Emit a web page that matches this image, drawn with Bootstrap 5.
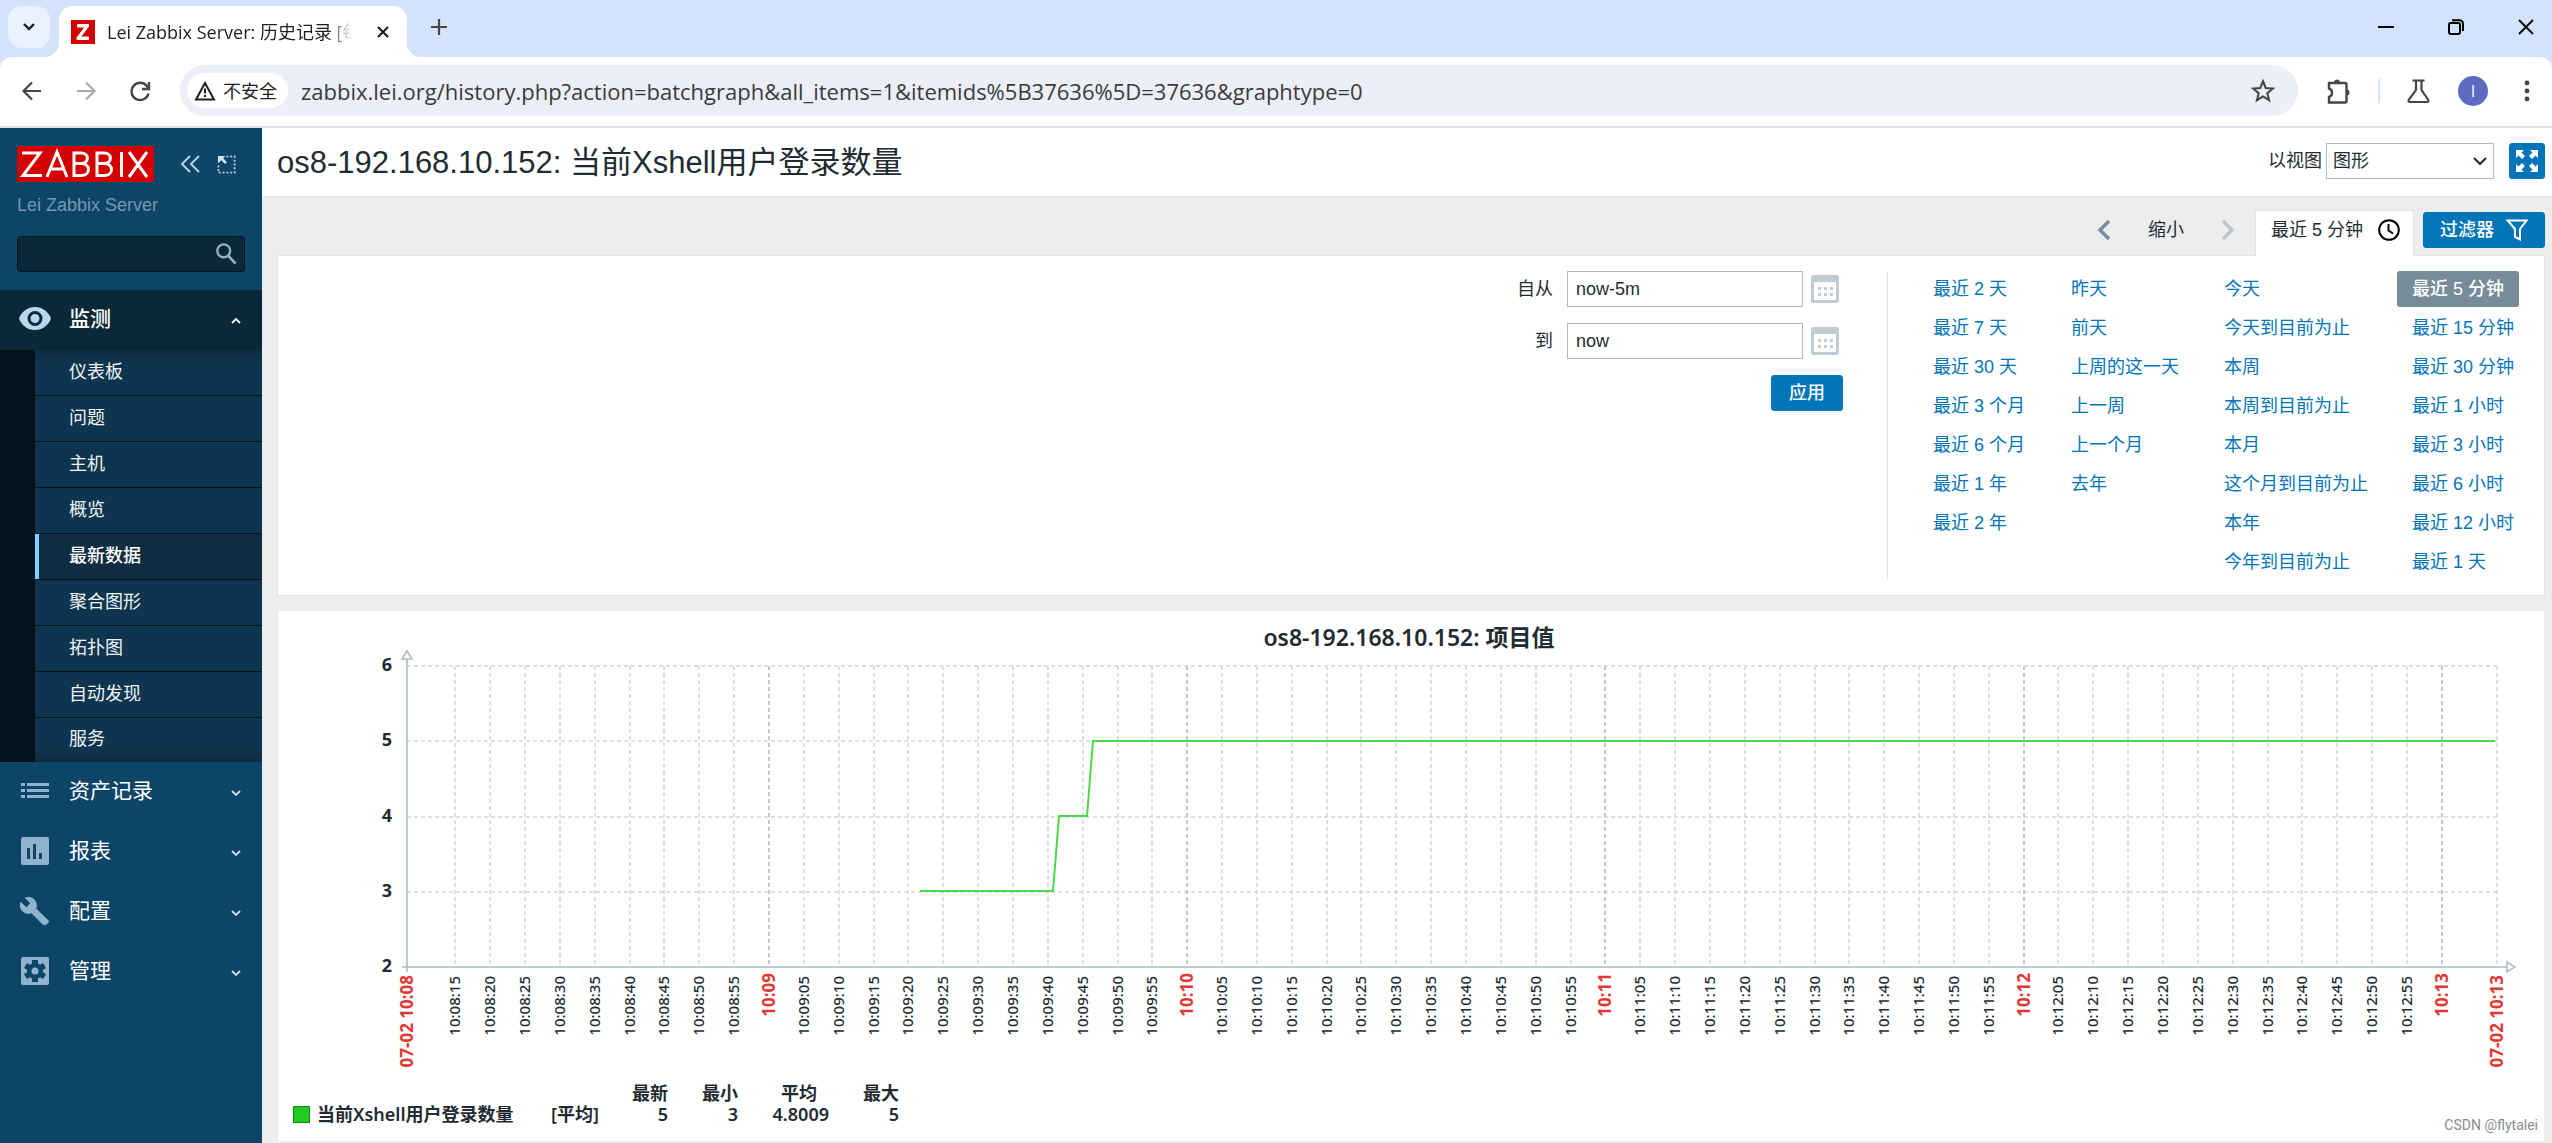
<!DOCTYPE html>
<html lang="zh-CN">
<head>
<meta charset="utf-8">
<meta name="viewport" content="width=device-width, initial-scale=1">
<title>Lei Zabbix Server: 历史记录</title>
<link href="https://cdn.jsdelivr.net/npm/bootstrap@5.3.0/dist/css/bootstrap.min.css" rel="stylesheet">
<style>
body{font:18px/24px "Liberation Sans","Noto Sans CJK SC",sans-serif;color:#1f2c33;background:#ebedef;overflow-x:hidden}
svg{display:block;flex:none}
button{font:inherit}
/* browser window */
.ui-font{font-family:"Open Sans","Noto Sans CJK SC",sans-serif}
.tabstrip{height:57px;background:#d3e2fd;padding-left:8px}
.tab-search{width:42px;height:42px;margin-top:6px;border-radius:14px;background:#e9f0fe !important}
.btab{width:348px;margin:6px 0 0 9px;padding:0 17px 0 12px;background:#fff;border-radius:14px 14px 0 0;position:relative}
.btab::before,.btab::after{content:"";position:absolute;bottom:0;width:14px;height:14px}
.btab::before{left:-14px;background:radial-gradient(circle at 0 0,transparent 14px,#fff 14px)}
.btab::after{right:-14px;background:radial-gradient(circle at 100% 0,transparent 14px,#fff 14px)}
.btab-title{flex:1;white-space:nowrap;overflow:hidden;margin-left:12px;margin-right:24px;color:#1f1f1f;-webkit-mask-image:linear-gradient(90deg,#000 90%,transparent)}
.win-btns{gap:46px;padding-right:18px}
.plain{background:none;border:0;padding:0;color:inherit}
.toolbar{height:71px;background:#fff;border-bottom:2px solid #dfe1e3;border-radius:12px 12px 0 0;padding:0 22px 2px 20px}
.toolbar-wrap{background:linear-gradient(#d3e2fd 50%,#fff 50%)}
.nav-btns{gap:30px;width:160px}
.omni{height:51px;border-radius:26px;background:#eceff7;padding:0 22px 0 7px}
.plain.chip{height:35px;width:101px;border-radius:18px;background:#fff;gap:7px;padding-left:7px;color:#1f1f1f}
.omni input{flex:1;height:40px;line-height:36px;border:0;background:none;outline:0;color:#3a3b3d;font-size:22px;margin-left:13px;padding:0}
.tools>*{margin-left:26px}
.tools>:last-child{margin-left:36px}
.plain.avatar{width:30px;height:30px;border-radius:50%;background:#5c6bc0;color:#fff;font-size:16px}
/* side menu */
.side{width:262px;background:#0d4569;color:#fff;flex:none}
.side-top{padding:18px 17px 0 17px;height:162px}
.logo{width:137px;height:36px;background:#d40000}
.side-tools{gap:17px;margin-left:26px}
.server{color:#7897ae;margin:11px 0 19px}
.search-box{height:36px;border:1px solid #04131c;border-radius:4px;background:#0a2838;padding:0 7px 0 8px}
.search-box input{flex:1;min-width:0;background:none;border:0;outline:0;color:#fff}
.main-item{height:60px;padding:0 19px 2px;color:#fff;text-decoration:none;font-size:21px}
.main-item .lbl{margin-left:18px;flex:1}
.main-item.on{background:#0a2838}
.main-item .ico{color:#8fb3cd}
.main-item.on .ico{color:#b8d8ef}
.sub{margin:0;padding:0 0 0 35px;background:#04131c;list-style:none}
.sub li{background:#0e354f;border-bottom:1px solid #04131c;height:46px}
.sub li:first-child{background:linear-gradient(#0d2c41,#0e354f 14px)}
.sub li:last-child{border:0;height:44px;background:linear-gradient(#0e354f 30px,#0d2c41)}
.sub a{display:flex;align-items:center;height:100%;padding:0 0 2px 34px;color:#f0f3f5;text-decoration:none}
.sub li.on{background:#0f2c41}
.sub li.on a{border-left:4px solid #80d0ff;padding-left:30px;color:#fff;font-weight:500}
/* page */
.head{height:69px;background:#fff;border-bottom:1px solid #dfe4e7;padding:0 7px 2px 15px}
.head h1{font-size:31px;line-height:36px;margin:0;padding-top:4px;font-weight:400}
.head select{width:168px;height:36px;border:1px solid #acbbc2;border-radius:0;padding:0 28px 0 6px;color:inherit;background:#fff url("data:image/svg+xml,%3Csvg xmlns='http://www.w3.org/2000/svg' width='14' height='9'%3E%3Cpath d='M1 1l6 6 6-6' fill='none' stroke='%231f2c33' stroke-width='2'/%3E%3C/svg%3E") no-repeat right 6px center;appearance:none}
.zbtn{height:36px;background:#0275b8;border:1px solid #0275b8;border-radius:3px;color:#fff;font-weight:500}
.full{width:36px;margin-left:15px}
.body-pad{padding:0 7px 0 15px}
.timebar{height:58px;padding-top:8px}
.zoomout{margin:0 37px}
.ttab{position:relative;z-index:1;height:46px;width:159px;margin:0 9px -1px 20px;border:1px solid #dfe4e7;border-bottom:0;border-radius:3px 3px 0 0;background:#fff;align-self:flex-end;padding:0 13px 8px 15px}
.filterbtn{width:122px}
.panel{background:#fff;border:1px solid #dfe4e7;padding:15px}
.period{width:326px}
.period input{width:236px;height:36px;border:1px solid #acbbc2;padding:0 8px;color:inherit}
.period label{width:36px;text-align:right;margin-right:14px}
.apply{width:72px}
.quick{border-left:1px solid #dfe4e7;margin-left:44px;padding:0 10px 0 30px;height:309px}
.quick ul{list-style:none;margin:0;padding:0}
.quick li{height:36px;margin-bottom:3px}
.quick a{display:inline-flex;align-items:center;height:36px;padding:0 15px;color:#0275b8;text-decoration:none;border-radius:3px;white-space:nowrap}
.quick a.on{background:#768d99;color:#fff;font-weight:500}
.q1{width:138px}.q2{width:153px}.q3{width:188px}.q4{width:122px}
.graph{background:#fff;margin:15px 1px 1px;padding-bottom:16px;font-family:"Noto Sans","Noto Sans CJK SC",sans-serif}
.graph svg text{fill:#1f2c33}
.legend-tbl{margin-left:14px;table-layout:fixed;width:607px;font-size:18px;line-height:21px}
.legend-tbl th,.legend-tbl td{padding:0;text-align:right;vertical-align:middle;white-space:nowrap;font-weight:600}
.legend-tbl td:first-child,.legend-tbl td:nth-child(2){text-align:left}
.legend-tbl .avg{padding-left:31px}
.legend-tbl th.avg{text-align:center}
.swatch{width:17px;height:17px;background:#1ecb1e;border:1px solid #148a14;margin:0 7px 0 1px}
.wm{position:absolute;right:14px;bottom:7px;font:14px/22px Roboto,sans-serif;color:#8a8d90}
</style>
<script src="https://cdn.jsdelivr.net/npm/bootstrap@5.3.0/dist/js/bootstrap.bundle.min.js"></script>
</head>
<body class="d-flex flex-column min-vh-100 position-relative">
<header class="ui-font">
  <div class="tabstrip d-flex">
    <button class="tab-search plain d-flex align-items-center justify-content-center" aria-label="搜索标签页"><svg width="14" height="10" viewBox="0 0 14 10"><path d="M2 2l5 5 5-5" fill="none" stroke="#1f1f1f" stroke-width="2.4"/></svg></button>
    <div class="btab d-flex align-items-center">
      <svg width="24" height="24" viewBox="0 0 24 24"><path fill="#d40000" d="M0 0h24v24H0z"/><path d="M6.500 4.500h11v2L9.500 17h8v2.500H6v-2L14 7H6.500z" fill="#fff" stroke="#fff"/></svg>
      <span class="btab-title">Lei Zabbix Server: 历史记录 [每</span>
      <button class="plain" aria-label="关闭"><svg width="14" height="14" viewBox="0 0 14 14"><path d="M2 2l10 10M12 2L2 12" stroke="#1f1f1f" stroke-width="2.200"/></svg></button>
    </div>
    <button class="plain ms-4 pb-1" aria-label="新标签页"><svg width="16" height="16" viewBox="0 0 16 16"><path d="M8 0v16M0 8h16" stroke="#444746" stroke-width="2.200"/></svg></button>
    <div class="win-btns d-flex align-items-center ms-auto pb-1">
      <button class="plain" aria-label="最小化"><svg width="16" height="16" viewBox="0 0 16 16"><path d="M0 8h16" stroke="#000" stroke-width="2"/></svg></button>
      <button class="plain ms-2" aria-label="还原"><svg width="16" height="16" viewBox="0 0 16 16" fill="none" stroke="#000" stroke-width="2"><rect x="1" y="4" width="11" height="11" rx="2"/><path d="M4 1.200h7.500a3.500 3.500 0 0 1 3.500 3.500V12"/></svg></button>
      <button class="plain ms-2" aria-label="关闭窗口"><svg width="16" height="16" viewBox="0 0 16 16"><path d="M1 1l14 14M15 1L1 15" stroke="#000" stroke-width="1.800"/></svg></button>
    </div>
  </div>
  <div class="toolbar-wrap"><div class="toolbar d-flex align-items-center">
    <div class="nav-btns d-flex align-items-center">
      <button class="plain" aria-label="后退"><svg width="24" height="24" viewBox="0 0 24 24" fill="none" stroke="#444746" stroke-width="2.200"><path d="M21 12H4M12 3.500L3.500 12l8.500 8.500"/></svg></button>
      <button class="plain" aria-label="前进"><svg width="24" height="24" viewBox="0 0 24 24" fill="none" stroke="#a9abac" stroke-width="2.200"><path d="M3 12h17M12 3.500l8.500 8.500-8.500 8.500"/></svg></button>
      <button class="plain" aria-label="刷新"><svg width="24" height="24" viewBox="0 0 24 24" fill="none" stroke="#444746" stroke-width="2.400"><path d="M20.500 14.500A8.600 8.600 0 1 1 19 7.200L20.500 9M21 3v7h-7"/></svg></button>
    </div>
    <div class="omni d-flex align-items-center flex-grow-1">
      <button class="chip plain d-flex align-items-center"><svg width="22" height="20" viewBox="0 0 22 20"><path d="M11 2L2 18.500h18z" fill="none" stroke="#1f1f1f" stroke-width="2"/><path d="M11 7.500v5M11 14v2" stroke="#1f1f1f" stroke-width="2"/></svg>不安全</button>
      <input type="text" aria-label="地址" value="zabbix.lei.org/history.php?action=batchgraph&amp;all_items=1&amp;itemids%5B37636%5D=37636&amp;graphtype=0">
      <button class="plain" aria-label="收藏"><svg width="26" height="26" viewBox="0 0 24 24"><path d="M12 3l2.500 6.200 6.600.5-5.100 4.300 1.600 6.500L12 17l-5.600 3.500L8 14 2.900 9.700l6.600-.5z" fill="none" stroke="#444746" stroke-width="1.900"/></svg></button>
    </div>
    <div class="tools d-flex align-items-center">
      <button class="plain" aria-label="扩展程序"><svg width="28" height="28" viewBox="0 0 28 28"><path d="M5 6h16a1.500 1.500 0 0 1 1.500 1.500V24a1.500 1.500 0 0 1-1.500 1.500H5V20c2.500-.8 3-2 3-4.200s-.5-3.600-3-4.300z" fill="none" stroke="#444746" stroke-width="2.400"/><path d="M10 6a3 3.500 0 0 1 6 0zM22.500 12.500a3 3 0 0 1 0 6z" fill="#444746"/></svg></button>
      <svg width="2" height="24"><path fill="#d3e2fd" d="M0 0h2v24H0z"/></svg>
      <button class="plain" aria-label="实验室"><svg width="26" height="26" viewBox="0 0 26 26" fill="none" stroke="#444746" stroke-width="2.200"><path d="M6.500 2.500h12M10 3v9L2.700 22c-.5 1 0 2 1 2h17.600c1 0 1.500-1 1-2L15.500 12V3"/></svg></button>
      <button class="avatar plain d-flex align-items-center justify-content-center" aria-label="账户">I</button>
      <button class="plain" aria-label="菜单"><svg width="6" height="24" viewBox="0 0 6 24"><g fill="#444746"><circle cx="3" cy="4" r="2.400"/><circle cx="3" cy="12" r="2.400"/><circle cx="3" cy="20" r="2.400"/></g></svg></button>
    </div>
  </div></div>
</header>

<div class="d-flex flex-grow-1">
  <nav class="side" aria-label="主菜单">
    <div class="side-top">
      <div class="d-flex align-items-center">
        <a href="#" class="logo" aria-label="Zabbix"><svg width="137" height="36" viewBox="0 0 137 36" fill="none" stroke="#fff" stroke-width="3"><path d="M5 7h18L6 29.500h19M30 31l10-25 10 25M33.500 23h13M57 6v25M55.500 7H64c8.500 0 8.500 10.500 0 10.500h-7M64 17.500c10 0 10 12 0 12h-7.500M80 6v25M78.500 7H87c8.500 0 8.500 10.500 0 10.500h-7M87 17.500c10 0 10 12 0 12h-7.500M104.500 6v25M112 6l18 25M130 6l-18 25"/></svg></a>
        <div class="side-tools d-flex align-items-center">
          <button class="plain" aria-label="折叠"><svg width="20" height="20" viewBox="0 0 20 20" fill="none" stroke="#b8d0e2" stroke-width="2"><path d="M10 2L2 10l8 8M19 2l-8 8 8 8"/></svg></button>
          <button class="plain" aria-label="隐藏"><svg width="19" height="19" viewBox="0 0 20 20"><path d="M10 1.500h8.500v17h-17V10" fill="none" stroke="#b8d0e0" stroke-width="2" stroke-dasharray="2 2"/><path d="M1 1h8L6.500 3.500l4 4-2 2-4-4L1 9z" fill="#d3e2ec"/></svg></button>
        </div>
      </div>
      <div class="server">Lei Zabbix Server</div>
      <form class="search-box d-flex align-items-center"><input type="text" aria-label="搜索"><button type="button" class="plain" aria-label="搜索"><svg width="22" height="22" viewBox="0 0 24 24" fill="none" stroke="#8fb0c8"><circle cx="9.500" cy="8.500" r="7" stroke-width="2.600"/><path d="M14.500 14l8 8.500" stroke-width="3"/></svg></button></form>
    </div>
    <a href="#" class="main-item on d-flex align-items-center"><svg class="ico" width="32" height="24" viewBox="0 0 32 24"><path fill="currentColor" fill-rule="evenodd" d="M16 0C8.500 0 2.300 4.900 0 11.500 2.300 18.200 8.500 23 16 23s13.700-4.800 16-11.500C29.700 4.900 23.500 0 16 0zm0 19a7.500 7.500 0 1 1 0-15 7.500 7.500 0 0 1 0 15zm0-12a4.500 4.500 0 1 0 0 9 4.500 4.500 0 0 0 0-9z"/></svg><span class="lbl fw-medium">监测</span><svg width="14" height="10" viewBox="0 0 14 10" class="mt-1"><path d="M3 7l4-4 4 4" fill="none" stroke="#fff" stroke-width="1.800"/></svg></a>
    <ul class="sub">
      <li><a href="#">仪表板</a></li><li><a href="#">问题</a></li><li><a href="#">主机</a></li><li><a href="#">概览</a></li><li class="on"><a href="#">最新数据</a></li><li><a href="#">聚合图形</a></li><li><a href="#">拓扑图</a></li><li><a href="#">自动发现</a></li><li><a href="#">服务</a></li>
    </ul>
    <a href="#" class="main-item d-flex align-items-center"><svg class="ico" width="32" height="28" viewBox="0 0 32 28"><path fill="currentColor" d="M2 6h4v3H2zm6 0h22v3H8zM2 12h4v3H2zm6 0h22v3H8zM2 18h4v3H2zm6 0h22v3H8z"/></svg><span class="lbl">资产记录</span><svg width="14" height="10" viewBox="0 0 14 10" class="mt-1"><path d="M3 3l4 4 4-4" fill="none" stroke="#cfdfea" stroke-width="1.800"/></svg></a>
    <a href="#" class="main-item d-flex align-items-center"><svg class="ico" width="32" height="28" viewBox="0 0 32 28"><path fill="currentColor" fill-rule="evenodd" d="M4 0h24a2 2 0 0 1 2 2v24a2 2 0 0 1-2 2H4a2 2 0 0 1-2-2V2a2 2 0 0 1 2-2zm4 11v11h3V11zm6-4v15h3V7zm6 9v6h3v-6z"/></svg><span class="lbl">报表</span><svg width="14" height="10" viewBox="0 0 14 10" class="mt-1"><path d="M3 3l4 4 4-4" fill="none" stroke="#cfdfea" stroke-width="1.800"/></svg></a>
    <a href="#" class="main-item d-flex align-items-center"><svg class="ico" width="32" height="28" viewBox="0 0 32 28"><path fill="currentColor" d="M29.500 23.500L17.300 11.400c1.200-3 .5-6.600-2-9C12.600-.2 8.900-.7 5.700.8l5.500 5.500-3.900 3.900L1.700 4.700C.1 7.900.8 11.700 3.400 14.300c2.500 2.500 6 3.200 9 2l12.200 12.100c.5.500 1.300.5 1.900 0l3-3c.6-.5.600-1.400 0-1.900z"/></svg><span class="lbl">配置</span><svg width="14" height="10" viewBox="0 0 14 10" class="mt-1"><path d="M3 3l4 4 4-4" fill="none" stroke="#cfdfea" stroke-width="1.800"/></svg></a>
    <a href="#" class="main-item d-flex align-items-center"><svg class="ico" width="32" height="28" viewBox="0 0 32 28"><rect x="2" width="28" height="28" rx="2" fill="currentColor"/><g fill="#0d4569"><circle cx="16" cy="14" r="8"/><path id="tooth" d="M13 3h6v6h-6z"/><use href="#tooth" transform="rotate(60 16 14)"/><use href="#tooth" transform="rotate(120 16 14)"/><use href="#tooth" transform="rotate(180 16 14)"/><use href="#tooth" transform="rotate(240 16 14)"/><use href="#tooth" transform="rotate(300 16 14)"/></g><circle cx="16" cy="14" r="3.500" fill="currentColor"/></svg><span class="lbl">管理</span><svg width="14" height="10" viewBox="0 0 14 10" class="mt-1"><path d="M3 3l4 4 4-4" fill="none" stroke="#cfdfea" stroke-width="1.800"/></svg></a>
  </nav>

  <main class="flex-grow-1">
    <div class="head d-flex align-items-center">
      <h1 class="flex-grow-1">os8-192.168.10.152: 当前Xshell用户登录数量</h1>
      <label for="view" class="me-1">以视图</label>
      <select id="view"><option>图形</option><option>数值</option></select>
      <button class="zbtn full p-0 d-flex align-items-center justify-content-center" aria-label="全屏"><svg width="22" height="22" viewBox="0 0 22 22"><g fill="#fff"><path id="fs" d="M0 0h8L5.500 2.500 9 6 6 9 2.500 5.500 0 8z"/><use href="#fs" transform="rotate(90 11 11)"/><use href="#fs" transform="rotate(180 11 11)"/><use href="#fs" transform="rotate(270 11 11)"/></g></svg></button>
    </div>
    <div class="body-pad">
      <div class="timebar d-flex align-items-center justify-content-end">
        <button class="plain" aria-label="向前"><svg width="14" height="22" viewBox="0 0 14 22"><path d="M12 2L3 11l9 9" fill="none" stroke="#768d99" stroke-width="3.400"/></svg></button>
        <button class="plain zoomout">缩小</button>
        <button class="plain" aria-label="向后"><svg width="14" height="22" viewBox="0 0 14 22"><path d="M2 2l9 9-9 9" fill="none" stroke="#bcc7cd" stroke-width="3.400"/></svg></button>
        <a href="#" class="ttab d-flex align-items-center justify-content-between text-reset text-decoration-none">最近 5 分钟<svg width="22" height="22" viewBox="0 0 22 22" fill="none" stroke="#000" stroke-width="2"><circle cx="11" cy="11" r="9.800"/><path d="M10.500 5v6.500l4.500 3"/></svg></a>
        <button class="zbtn d-flex align-items-center justify-content-between px-3 filterbtn">过滤器<svg width="22" height="22" viewBox="0 0 22 22"><path d="M1.500 1.500h19L14 10v10.500l-5-2.500v-8z" fill="none" stroke="#fff" stroke-width="2"/></svg></button>
      </div>
      <section class="panel d-flex justify-content-end">
        <form class="period">
          <div class="d-flex align-items-center mb-3"><label for="from">自从</label><input id="from" type="text" value="now-5m"><button type="button" class="plain ms-auto pe-1" aria-label="日历"><svg width="28" height="28" viewBox="0 0 28 28"><rect x="1.500" y="1.500" width="25" height="25" rx="1" fill="none" stroke="#c0ccd2" stroke-width="3"/><path d="M1 1h26v6H1zM7 12h3v3H7zm6 0h3v3h-3zm6 0h3v3h-3zM7 18h3v3H7zm6 0h3v3h-3zm6 0h3v3h-3z" fill="#c0ccd2"/></svg></button></div>
          <div class="d-flex align-items-center mb-3"><label for="to">到</label><input id="to" type="text" value="now"><button type="button" class="plain ms-auto pe-1" aria-label="日历"><svg width="28" height="28" viewBox="0 0 28 28"><rect x="1.500" y="1.500" width="25" height="25" rx="1" fill="none" stroke="#c0ccd2" stroke-width="3"/><path d="M1 1h26v6H1zM7 12h3v3H7zm6 0h3v3h-3zm6 0h3v3h-3zM7 18h3v3H7zm6 0h3v3h-3zm6 0h3v3h-3z" fill="#c0ccd2"/></svg></button></div>
          <div class="text-end"><button type="button" class="zbtn apply p-0">应用</button></div>
        </form>
        <div class="quick d-flex">
          <ul class="q1"><li><a href="#">最近 2 天</a></li><li><a href="#">最近 7 天</a></li><li><a href="#">最近 30 天</a></li><li><a href="#">最近 3 个月</a></li><li><a href="#">最近 6 个月</a></li><li><a href="#">最近 1 年</a></li><li><a href="#">最近 2 年</a></li></ul>
          <ul class="q2"><li><a href="#">昨天</a></li><li><a href="#">前天</a></li><li><a href="#">上周的这一天</a></li><li><a href="#">上一周</a></li><li><a href="#">上一个月</a></li><li><a href="#">去年</a></li></ul>
          <ul class="q3"><li><a href="#">今天</a></li><li><a href="#">今天到目前为止</a></li><li><a href="#">本周</a></li><li><a href="#">本周到目前为止</a></li><li><a href="#">本月</a></li><li><a href="#">这个月到目前为止</a></li><li><a href="#">本年</a></li><li><a href="#">今年到目前为止</a></li></ul>
          <ul class="q4"><li><a href="#" class="on">最近 5 分钟</a></li><li><a href="#">最近 15 分钟</a></li><li><a href="#">最近 30 分钟</a></li><li><a href="#">最近 1 小时</a></li><li><a href="#">最近 3 小时</a></li><li><a href="#">最近 6 小时</a></li><li><a href="#">最近 12 小时</a></li><li><a href="#">最近 1 天</a></li></ul>
        </div>
      </section>
      <section class="graph">
        <svg id="plot" class="w-100" viewBox="0 0 2266 472"></svg>
        <table class="legend-tbl">
          <colgroup><col width="259"><col width="50"><col width="67"><col width="70"><col width="91"><col width="70"></colgroup>
          <thead><tr><th></th><th></th><th>最新</th><th>最小</th><th class="avg">平均</th><th>最大</th></tr></thead>
          <tbody><tr><td><span class="d-flex align-items-center"><i class="swatch"></i>当前Xshell用户登录数量</span></td><td>[平均]</td><td>5</td><td>3</td><td class="avg">4.8009</td><td>5</td></tr></tbody>
        </table>
      </section>
    </div>
  </main>
</div>
<div class="wm">CSDN @flytalei</div>
<script>
(function(){
  var x0=129,x1=2219,yT=55,yB=356,step=34.85,min9=491,out='';
  function line(a,b,c,d,col,dash){return '<line x1="'+a+'" y1="'+b+'" x2="'+c+'" y2="'+d+'" stroke="'+col+'" stroke-width="1.5"'+(dash?' stroke-dasharray="4 3"':'')+'/>';}
  function label(x,y,t,size,w,col){return '<text transform="translate('+x+' '+y+') rotate(-90)" text-anchor="end" font-size="'+size+'" font-weight="'+w+'" style="fill:'+col+'">'+t+'</text>';}
  out+='<text x="1131" y="35" text-anchor="middle" font-size="23" font-weight="600">os8-192.168.10.152: 项目值</text>';
  for(var v=2;v<=6;v++){var y=yB-Math.round((v-2)*75.2);
    if(v>2)out+=line(x0,y,x1,y,'#ced7db',true);
    out+='<text x="114" y="'+(y+5)+'" text-anchor="end" font-size="18" font-weight="700">'+v+'</text>';}
  for(var s=15;s<=300;s+=5){var x=Math.round(min9+(s-60)/5*step),m=8+Math.floor(s/60),q=s%60;
    var t='10:'+(m<10?'0'+m:m);
    out+=line(x,yT,x,yB,q?'#ced7db':'#acbbc2',true);
    out+=q?label(x+5,365,t+':'+(q<10?'0'+q:q),15,500,'#1f2c33'):label(x+6,362,t,17,700,'#e33734');}
  out+=line(x1,yT,x1,yB,'#ced7db',true);
  out+=line(x0,48,x0,361,'#acbbc2')+line(124,yB,2229,yB,'#acbbc2');
  out+='<path d="M129 40l5 8h-10zM2229 351v10l8-5z" fill="#fff" stroke="#acbbc2" stroke-width="1.5"/>';
  out+=label(135,364,'07-02 10:08',17,700,'#e33734')+label(2225,364,'07-02 10:13',17,700,'#e33734');
  out+='<polyline points="642,280 775,280 781,205 809,205 815,130 2217,130" fill="none" stroke="#4fd84a" stroke-width="2"/>';
  document.getElementById('plot').innerHTML=out;
})();
</script>
</body>
</html>
